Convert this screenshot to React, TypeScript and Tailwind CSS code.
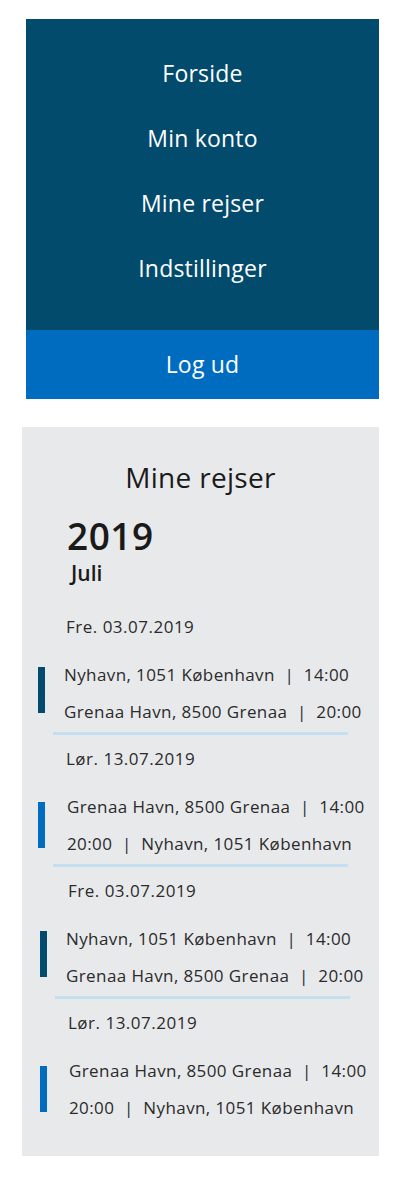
import React from "react";

const font = { fontFamily: '"Open Sans", "Noto Sans", sans-serif' };

interface Trip {
  date: string;
  from: string;
  to: string;
  outbound: boolean;
}

const trips: Trip[] = [
  { date: "Fre. 03.07.2019", from: "Nyhavn, 1051 København  |  14:00", to: "Grenaa Havn, 8500 Grenaa  |  20:00", outbound: true },
  { date: "Lør. 13.07.2019", from: "Grenaa Havn, 8500 Grenaa  |  14:00", to: "20:00  |  Nyhavn, 1051 København", outbound: false },
  { date: "Fre. 03.07.2019", from: "Nyhavn, 1051 København  |  14:00", to: "Grenaa Havn, 8500 Grenaa  |  20:00", outbound: true },
  { date: "Lør. 13.07.2019", from: "Grenaa Havn, 8500 Grenaa  |  14:00", to: "20:00  |  Nyhavn, 1051 København", outbound: false },
];

function NavMenu() {
  const items = ["Forside", "Min konto", "Mine rejser", "Indstillinger"];
  return (
    <nav className="mx-[26px] mt-[19px] w-[353px] bg-[#024b6d] text-white">
      <ul className="flex flex-col items-center pt-[39px] pb-[12px]">
        {items.map((item) => (
          <li key={item} className="h-[65px] text-[23px] leading-[30px] tracking-[0.2px]">
            {item}
          </li>
        ))}
      </ul>
      <button className="flex h-[69px] w-full items-center justify-center bg-[#006cbf] text-[23px] tracking-[0.2px]">
        Log ud
      </button>
    </nav>
  );
}

function TripGroup({ trip, index, last }: { trip: Trip; index: number; last: boolean }) {
  // the lower two groups sit a couple of pixels further right in the design
  const shifted = index >= 2;
  return (
    <div className={`pb-[14px] ${shifted ? "pl-[2px]" : ""}`}>
      <div className="pl-[44px] text-[17px] leading-[20px] tracking-[0.5px] text-[#2b2b2b]">{trip.date}</div>
      <div className="mt-[19px] flex">
        <span
          className={`ml-[16px] h-[46px] w-[7px] shrink-0 ${
            trip.outbound ? "mt-[11px] bg-[#024b6d]" : "mt-[14px] bg-[#006cbf]"
          }`}
        />
        <div
          className={`whitespace-pre text-[17px] leading-[37px] tracking-[0.4px] text-[#2b2b2b] ${
            trip.outbound ? "ml-[19px]" : "ml-[22px]"
          }`}
        >
          <div>{trip.from}</div>
          <div>{trip.to}</div>
        </div>
      </div>
      {!last && <div className="ml-[31px] mt-[2px] h-[3px] w-[295px] bg-[#c4dff0]" />}
    </div>
  );
}

export default function App() {
  return (
    <div className="min-h-[1197px] bg-white pb-[42px]" style={font}>
      <NavMenu />
      <section className="ml-[22px] mt-[28px] w-[357px] bg-[#e8e9eb] pb-[16px] pt-[28px]">
        <h1 className="text-center text-[28px] leading-[44px] tracking-[0.3px] text-[#1a1a1a]">Mine rejser</h1>
        <div className="ml-[45px] mt-[17px] text-[37px] font-semibold leading-[40px] tracking-[0.5px] text-[#1a1a1a]">
          2019
        </div>
        <div className="ml-[49px] mt-[3px] text-[21px] font-semibold leading-[28px] text-[#1a1a1a]">Juli</div>
        <div className="mt-[30px]">
          {trips.map((t, i) => (
            <TripGroup key={i} trip={t} index={i} last={i === trips.length - 1} />
          ))}
        </div>
      </section>
    </div>
  );
}
